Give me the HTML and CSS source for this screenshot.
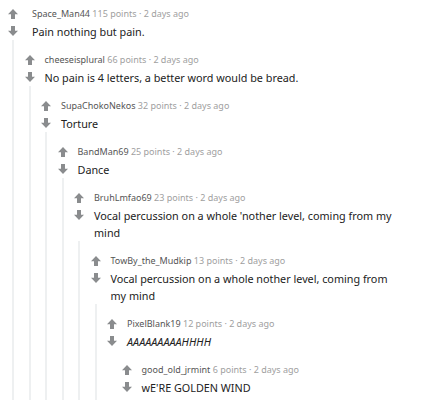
FILE: index.html
```html
<!DOCTYPE html>
<html>
<head>
<meta charset="utf-8">
<link rel="stylesheet" href="styles.css">
</head>
<body>
<svg width="0" height="0" class="defs">
  <defs>
    <symbol id="up" viewBox="0 0 10 10"><path d="M5 0 L10 5.2 H7 V10 H3 V5.2 H0 Z"/></symbol>
    <symbol id="down" viewBox="0 0 10 10"><path d="M5 10 L10 4.8 H7 V0 H3 V4.8 H0 Z"/></symbol>
  </defs>
</svg>
<div class="thread">
  <div class="comment">
    <div class="row">
      <div class="votes"><svg class="arrow"><use href="#up"/></svg><svg class="arrow"><use href="#down"/></svg></div>
      <div class="content top">
        <div class="meta"><span class="user">Space_Man44</span> <span class="info">115 points · 2 days ago</span></div>
        <div class="text">Pain nothing but pain.</div>
      </div>
    </div>
    <div class="children">
      <div class="comment">
        <div class="row">
          <div class="votes"><svg class="arrow"><use href="#up"/></svg><svg class="arrow"><use href="#down"/></svg></div>
          <div class="content">
            <div class="meta"><span class="user">cheeseisplural</span> <span class="info">66 points · 2 days ago</span></div>
            <div class="text">No pain is 4 letters, a better word would be bread.</div>
          </div>
        </div>
        <div class="children">
          <div class="comment">
            <div class="row">
              <div class="votes"><svg class="arrow"><use href="#up"/></svg><svg class="arrow"><use href="#down"/></svg></div>
              <div class="content">
                <div class="meta"><span class="user">SupaChokoNekos</span> <span class="info">32 points · 2 days ago</span></div>
                <div class="text">Torture</div>
              </div>
            </div>
            <div class="children">
              <div class="comment">
                <div class="row">
                  <div class="votes"><svg class="arrow"><use href="#up"/></svg><svg class="arrow"><use href="#down"/></svg></div>
                  <div class="content">
                    <div class="meta"><span class="user">BandMan69</span> <span class="info">25 points · 2 days ago</span></div>
                    <div class="text">Dance</div>
                  </div>
                </div>
                <div class="children">
                  <div class="comment">
                    <div class="row">
                      <div class="votes"><svg class="arrow"><use href="#up"/></svg><svg class="arrow"><use href="#down"/></svg></div>
                      <div class="content">
                        <div class="meta"><span class="user">BruhLmfao69</span> <span class="info">23 points · 2 days ago</span></div>
                        <div class="text">Vocal percussion on a whole 'nother level, coming from my mind</div>
                      </div>
                    </div>
                    <div class="children">
                      <div class="comment">
                        <div class="row">
                          <div class="votes"><svg class="arrow"><use href="#up"/></svg><svg class="arrow"><use href="#down"/></svg></div>
                          <div class="content">
                            <div class="meta"><span class="user">TowBy_the_Mudkip</span> <span class="info">13 points · 2 days ago</span></div>
                            <div class="text">Vocal percussion on a whole nother level, coming from my mind</div>
                          </div>
                        </div>
                        <div class="children">
                          <div class="comment">
                            <div class="row">
                              <div class="votes"><svg class="arrow"><use href="#up"/></svg><svg class="arrow"><use href="#down"/></svg></div>
                              <div class="content">
                                <div class="meta"><span class="user">PixelBlank19</span> <span class="info">12 points · 2 days ago</span></div>
                                <div class="text"><em>AAAAAAAAAHHHH</em></div>
                              </div>
                            </div>
                            <div class="children">
                              <div class="comment">
                                <div class="row">
                                  <div class="votes"><svg class="arrow"><use href="#up"/></svg><svg class="arrow"><use href="#down"/></svg></div>
                                  <div class="content">
                                    <div class="meta"><span class="user">good_old_jrmint</span> <span class="info">6 points · 2 days ago</span></div>
                                    <div class="text">wE'RE GOLDEN WIND</div>
                                  </div>
                                </div>
                              </div>
                            </div>
                          </div>
                        </div>
                      </div>
                    </div>
                  </div>
                </div>
              </div>
            </div>
          </div>
        </div>
      </div>
    </div>
  </div>
</div>
</body>
</html>
```

FILE: styles.css
```css
html, body {
  height: 100%;
  overflow: hidden;
}
body {
  margin: 0;
  padding: 8px 22px 0 8px;
  background: #ffffff;
  font-family: "Noto Sans", "Open Sans", sans-serif;
  color: #1c1c1c;
  box-sizing: border-box;
}
.defs {
  position: absolute;
}
.row {
  display: flex;
  align-items: flex-start;
}
.votes {
  width: 10px;
  flex: none;
  display: flex;
  flex-direction: column;
  gap: 7px;
  padding-top: 1px;
}
.arrow {
  width: 10px;
  height: 10px;
  fill: #8a8c8e;
  display: block;
}
.content {
  margin-left: 10px;
  min-width: 0;
}
.content.top {
  margin-left: 14px;
}
.meta {
  font-size: 9px;
  line-height: 12px;
  height: 12px;
  white-space: nowrap;
}
.user {
  color: #555555;
}
.info {
  color: #a0a0a0;
}
.text {
  margin-top: 3px;
  font-size: 10.8px;
  line-height: 17px;
  color: #222222;
}
.children {
  margin-left: 4px;
  border-left: 2px solid #eef0f1;
  padding-left: 10.5px;
  padding-top: 14px;
  padding-bottom: 400px;
}
.children .children .children .children .children .children .children {
  border-left: none;
}
```
